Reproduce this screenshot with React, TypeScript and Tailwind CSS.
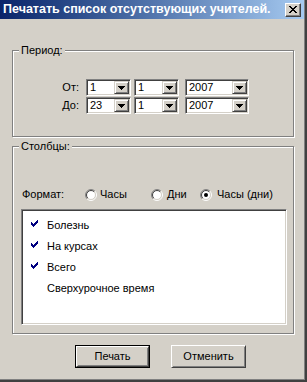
import React from "react";

const font = { fontFamily: '"Liberation Sans", Arial, sans-serif' };

function Arrow() {
  return (
    <svg width="7" height="4" viewBox="0 0 7 4" shapeRendering="crispEdges">
      <rect x="0" y="0" width="7" height="1" fill="#000" />
      <rect x="1" y="1" width="5" height="1" fill="#000" />
      <rect x="2" y="2" width="3" height="1" fill="#000" />
      <rect x="3" y="3" width="1" height="1" fill="#000" />
    </svg>
  );
}

function Combo({ value, w }: { value: string; w: string }) {
  return (
    <div
      className={`${w} h-[17px] flex border border-t-[#808080] border-l-[#808080] border-b-white border-r-white bg-white shadow-[inset_1px_1px_0_#404040,inset_-1px_-1px_0_#d4d0c8] p-[1px]`}
    >
      <div className="flex-1 pl-[2px] text-[11px] leading-[13px] text-black">{value}</div>
      <div className="w-[15px] h-[13px] bg-[#d4d0c8] flex items-center justify-center border border-t-[#d4d0c8] border-l-[#d4d0c8] border-b-[#404040] border-r-[#404040] shadow-[inset_1px_1px_0_#fff,inset_-1px_-1px_0_#808080]">
        <Arrow />
      </div>
    </div>
  );
}

function Radio({ checked }: { checked?: boolean }) {
  const a = (r: number) => {
    const k = r * 0.7071;
    return { bl: `${6 - k} ${6 + k}`, tr: `${6 + k} ${6 - k}` };
  };
  const o = a(5.5);
  const i = a(4.5);
  return (
    <svg width="12" height="12" viewBox="0 0 12 12">
      <circle cx="6" cy="6" r="4.5" fill="#fff" />
      <path d={`M ${o.bl} A 5.5 5.5 0 0 1 ${o.tr}`} stroke="#808080" fill="none" />
      <path d={`M ${o.tr} A 5.5 5.5 0 0 1 ${o.bl}`} stroke="#fff" fill="none" />
      <path d={`M ${i.bl} A 4.5 4.5 0 0 1 ${i.tr}`} stroke="#404040" fill="none" />
      <path d={`M ${i.tr} A 4.5 4.5 0 0 1 ${i.bl}`} stroke="#d4d0c8" fill="none" />
      {checked && <circle cx="6" cy="6" r="2" fill="#000" />}
    </svg>
  );
}

function Check() {
  const cols = [2, 3, 4, 3, 2, 1, 0];
  return (
    <svg width="7" height="7" viewBox="0 0 7 7" shapeRendering="crispEdges">
      {cols.map((y, x) => (
        <rect key={x} x={x} y={y} width="1" height="3" fill="#000080" />
      ))}
    </svg>
  );
}

function Group({
  label,
  className,
  children,
}: {
  label: string;
  className: string;
  children: React.ReactNode;
}) {
  return (
    <div
      className={`relative ml-[12px] w-[282px] border border-[#808080] shadow-[1px_1px_0_#fff,inset_1px_1px_0_#fff] ${className}`}
    >
      <div className="absolute -top-[7px] left-[6px] px-[2px] bg-[#d4d0c8] text-[11px] leading-[13px] text-black">
        {label}
      </div>
      {children}
    </div>
  );
}

function Button({ label, def }: { label: string; def?: boolean }) {
  return (
    <div
      className={`w-[75px] h-[23px] ${def ? "border border-black p-0" : ""} flex`}
    >
      <div className="flex-1 flex items-center justify-center bg-[#d4d0c8] border border-t-white border-l-white border-b-[#404040] border-r-[#404040] shadow-[inset_1px_1px_0_#d4d0c8,inset_-1px_-1px_0_#808080] text-[11px] text-black">
        {label}
      </div>
    </div>
  );
}

export default function App() {
  const items: [string, boolean][] = [
    ["Болезнь", true],
    ["На курсах", true],
    ["Всего", true],
    ["Сверхурочное время", false],
  ];
  return (
    <div
      className="w-[307px] h-[382px] bg-[#d4d0c8] border-r-2 border-b-2 border-[#404040] shadow-[inset_-1px_-1px_0_#808080] flex flex-col overflow-hidden"
      style={font}
    >
      <div className="h-[19px] w-[304px] flex items-center justify-between bg-gradient-to-r from-[#0a246a] to-[#a6caf0] pl-[3px] pr-[3px]">
        <span className="text-white font-bold text-[12.5px] leading-[15px] whitespace-nowrap">
          Печатать список отсутствующих учителей.
        </span>
        <div className="w-[16px] h-[14px] bg-[#d4d0c8] flex items-center justify-center border border-t-white border-l-white border-b-[#404040] border-r-[#404040] shadow-[inset_-1px_-1px_0_#808080]">
          <svg width="8" height="7" viewBox="0 0 8 7" shapeRendering="crispEdges">
            {[0, 1, 2, 3, 4, 5, 6].map((y) => (
              <React.Fragment key={y}>
                <rect x={y} y={y} width="2" height="1" fill="#000" />
                <rect x={6 - y} y={y} width="2" height="1" fill="#000" />
              </React.Fragment>
            ))}
          </svg>
        </div>
      </div>

      <Group label="Период:" className="mt-[31px] h-[87px]">
        <div className="pt-[28px] flex flex-col gap-[1px]">
          {[
            ["От:", "1", "1", "2007"],
            ["До:", "23", "1", "2007"],
          ].map(([l, d, m, y]) => (
            <div key={l} className="flex items-center h-[17px]">
              <div className="w-[67px] text-right text-[11px] text-black pr-[1px]">{l}</div>
              <div className="ml-[6px] flex">
                <Combo value={d} w="w-[45px]" />
                <div className="ml-[3px]">
                  <Combo value={m} w="w-[45px]" />
                </div>
                <div className="ml-[6px]">
                  <Combo value={y} w="w-[64px]" />
                </div>
              </div>
            </div>
          ))}
        </div>
      </Group>

      <Group label="Столбцы:" className="mt-[9px] h-[188px]">
        <div className="pt-[41px] pl-[9px] flex items-center h-[54px] text-[11px] text-black">
          <div className="w-[63px]">Формат:</div>
          <div className="w-[66px] flex items-center gap-[3px]">
            <Radio />
            <span>Часы</span>
          </div>
          <div className="w-[49px] flex items-center gap-[4px]">
            <Radio />
            <span>Дни</span>
          </div>
          <div className="flex items-center gap-[5px]">
            <Radio checked />
            <span>Часы (дни)</span>
          </div>
        </div>
        <div className="mt-[8px] ml-[8px] w-[266px] h-[116px] bg-white border border-t-[#808080] border-l-[#808080] border-b-white border-r-white shadow-[inset_1px_1px_0_#404040,inset_-1px_-1px_0_#d4d0c8] pt-[5px]">
          {items.map(([t, c]) => (
            <div key={t} className="h-[21px] flex items-center pl-[9px] text-[11px] text-black">
              <div className="w-[7px] h-[7px] -mt-[4px]">{c && <Check />}</div>
              <span className="ml-[9px]">{t}</span>
            </div>
          ))}
        </div>
      </Group>

      <div className="mt-[11px] pl-[75px] flex gap-[21px]">
        <Button label="Печать" def />
        <Button label="Отменить" />
      </div>
    </div>
  );
}
